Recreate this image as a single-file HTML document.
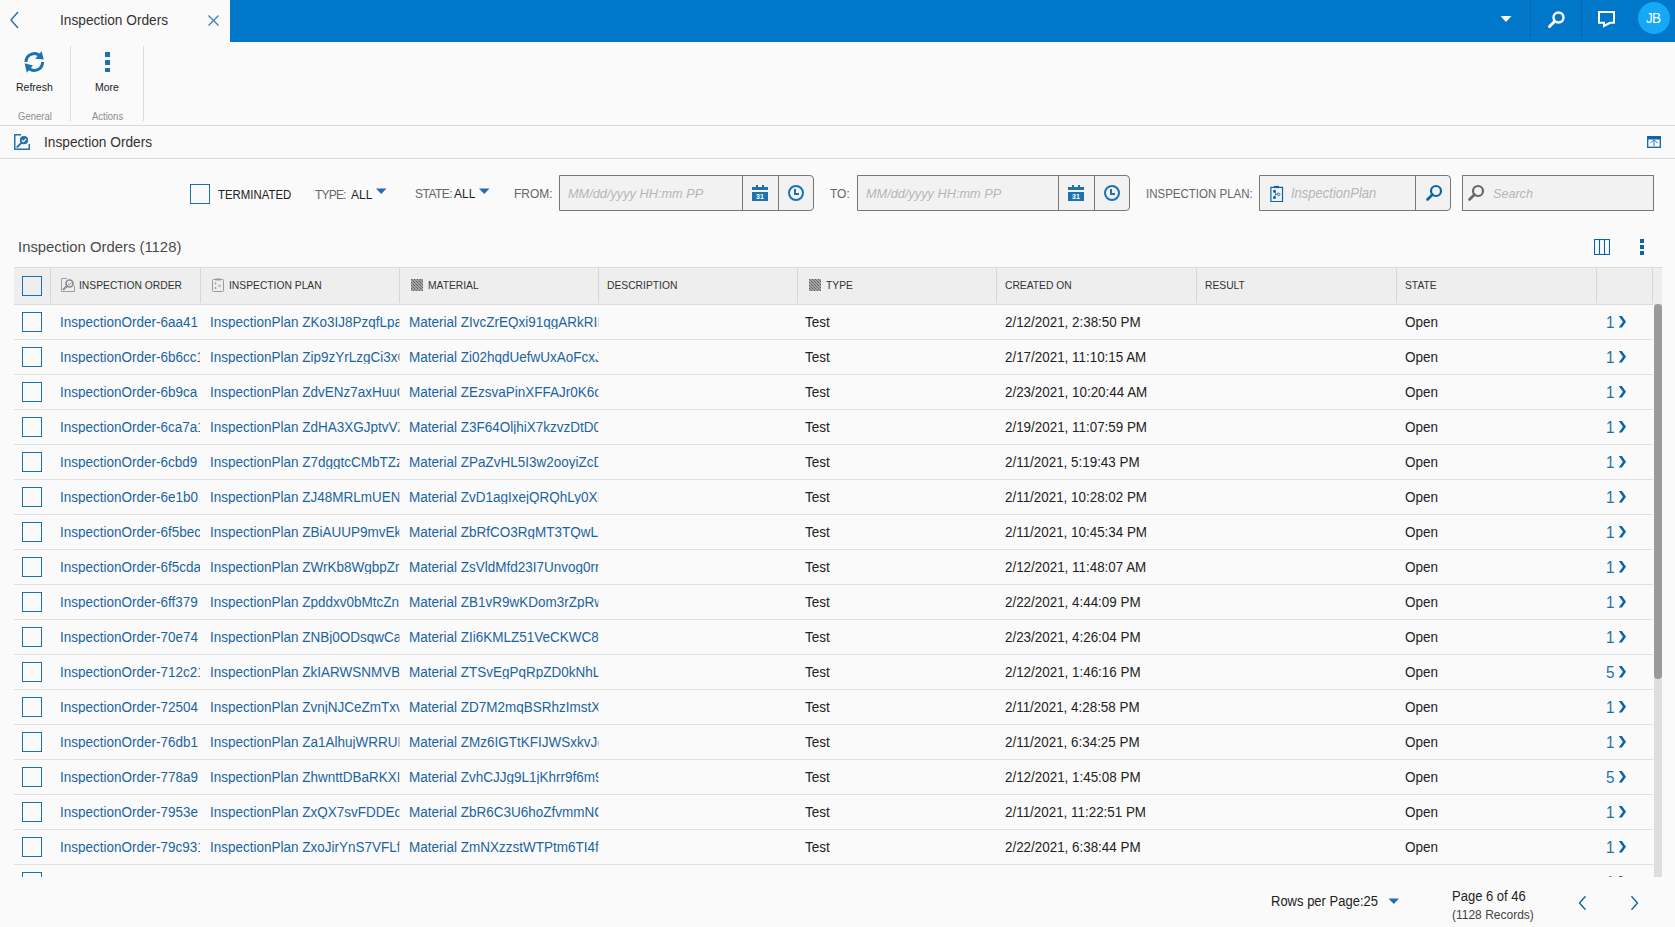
<!DOCTYPE html><html><head><meta charset="utf-8"><style>
*{margin:0;padding:0;box-sizing:border-box}
html,body{width:1675px;height:927px;overflow:hidden;background:#fafafa;font-family:"Liberation Sans",sans-serif;color:#333}
.a{position:absolute}
.t{position:absolute;white-space:nowrap;line-height:1;transform:scaleX(0.933);transform-origin:0 0}
</style></head><body>
<div class="a" style="left:230px;top:0;width:1445px;height:42px;background:#0077c8"></div>
<svg class="a" style="left:8px;top:10px" width="14" height="20" viewBox="0 0 14 20"><path d="M10 2 L3 10 L10 18" fill="none" stroke="#1f6fb2" stroke-width="1.4"/></svg>
<div class="t" style="left:60px;top:13px;font-size:14.69px;color:#333">Inspection Orders</div>
<svg class="a" style="left:207px;top:14px" width="13" height="13" viewBox="0 0 13 13"><path d="M1.5 1.5 L11.5 11.5 M11.5 1.5 L1.5 11.5" stroke="#3d7fb8" stroke-width="1.3"/></svg>
<svg class="a" style="left:1500px;top:15px" width="12" height="8" viewBox="0 0 12 8"><path d="M0.5 1 L11.5 1 L6 7 Z" fill="#fff"/></svg>
<div class="a" style="left:1530px;top:0;width:1px;height:42px;background:#0867b0"></div>
<div class="a" style="left:1581px;top:0;width:1px;height:42px;background:#0867b0"></div>
<svg class="a" style="left:1546px;top:10px" width="22" height="20" viewBox="0 0 22 20"><circle cx="12.5" cy="7.5" r="5" fill="none" stroke="#fff" stroke-width="2.4"/><path d="M8.8 11.2 L3.5 16.5" stroke="#fff" stroke-width="3" stroke-linecap="round"/></svg>
<svg class="a" style="left:1596px;top:10px" width="20" height="19" viewBox="0 0 20 19"><path d="M3 2 H18 V12.8 H14 L8 16 V12.8 H3 Z" fill="none" stroke="#fff" stroke-width="2" stroke-linejoin="miter"/></svg>
<div class="a" style="left:1638px;top:2px;width:32px;height:32px;border-radius:50%;background:#14a8f7"></div>
<div class="t" style="left:1646px;top:11px;font-size:14.47px;letter-spacing:-0.8px;color:#fff">JB</div>
<svg class="a" style="left:24px;top:50px" width="21" height="24" viewBox="0 0 21 24"><path d="M2 12 A8.3 8.3 0 0 1 16.66 6.66" fill="none" stroke="#1f72b0" stroke-width="3"/><path d="M17.6 1.2 L19.8 9.6 L11.2 8.8 Z" fill="#1f72b0"/><path d="M18.6 12 A8.3 8.3 0 0 1 3.94 17.33" fill="none" stroke="#1f72b0" stroke-width="3"/><path d="M0.6 13.2 L9 15.4 L2.8 22.8 Z" fill="#1f72b0"/></svg>
<div class="t" style="left:16px;top:82px;font-size:11.26px;color:#222">Refresh</div>
<div class="a" style="left:105px;top:52px;width:4.5px;height:4.5px;background:#1f72b0"></div>
<div class="a" style="left:105px;top:60px;width:4.5px;height:4.5px;background:#1f72b0"></div>
<div class="a" style="left:105px;top:67.5px;width:4.5px;height:4.5px;background:#1f72b0"></div>
<div class="t" style="left:95px;top:82px;font-size:11.26px;color:#222">More</div>
<div class="t" style="left:18px;top:112px;font-size:10.18px;color:#8c8c8c">General</div>
<div class="t" style="left:92px;top:112px;font-size:10.18px;color:#8c8c8c">Actions</div>
<div class="a" style="left:70px;top:46px;width:1px;height:75px;background:#dcdcdc"></div>
<div class="a" style="left:143px;top:46px;width:1px;height:75px;background:#dcdcdc"></div>
<div class="a" style="left:0;top:125px;width:1675px;height:1px;background:#d9d9d9"></div>
<svg class="a" style="left:14px;top:134px" width="16" height="16" viewBox="0 0 16 16"><path d="M7 0.75 H0.75 V15.25 H15.25 V10" fill="none" stroke="#1f72b0" stroke-width="1.5"/><circle cx="10" cy="6.2" r="4.1" fill="#1f72b0"/><path d="M7.9 6.2 L9.5 7.7 L12.1 4.8" fill="none" stroke="#fff" stroke-width="1.2"/><path d="M7.4 8.9 L3.3 12.9" stroke="#1f72b0" stroke-width="2" stroke-linecap="round"/></svg>
<div class="t" style="left:44px;top:134.5px;font-size:14.69px;color:#333">Inspection Orders</div>
<svg class="a" style="left:1647px;top:136px" width="14" height="12" viewBox="0 0 14 12"><rect x="0.7" y="0.7" width="12.6" height="10.6" fill="none" stroke="#0b64a6" stroke-width="1.3"/><rect x="0.5" y="0.5" width="13" height="3" fill="#0b64a6"/><path d="M7 10 V4 M3.5 7 L7 3.8 L10.5 7" fill="none" stroke="#2a78b8" stroke-width="1"/></svg>
<div class="a" style="left:0;top:158px;width:1675px;height:1px;background:#d9d9d9"></div>
<div class="a" style="left:190px;top:184px;width:20px;height:20px;border:1.5px solid #1f6fa8;background:#fff0"></div>
<div class="t" style="left:218px;top:189px;font-size:12.22px;color:#222">TERMINATED</div>
<div class="t" style="left:315px;top:189px;font-size:12.86px;letter-spacing:-0.8px;color:#666">TYPE:</div>
<div class="t" style="left:351px;top:189px;font-size:12.86px;color:#222">ALL</div>
<svg class="a" style="left:376px;top:188px" width="11" height="7" viewBox="0 0 11 7"><path d="M0 0.5 H10.5 L5.25 6 Z" fill="#1f6fb2"/></svg>
<div class="t" style="left:415px;top:188px;font-size:12.86px;letter-spacing:-0.55px;color:#666">STATE:</div>
<div class="t" style="left:454px;top:188px;font-size:12.86px;color:#222">ALL</div>
<svg class="a" style="left:479px;top:188px" width="11" height="7" viewBox="0 0 11 7"><path d="M0 0.5 H10.5 L5.25 6 Z" fill="#1f6fb2"/></svg>
<div class="t" style="left:514px;top:188px;font-size:12.86px;color:#666">FROM:</div>
<div class="a" style="left:559px;top:175px;width:255px;height:36px;border:1px solid #777;border-radius:0 4px 4px 0;background:#f2f2f2"></div>
<div class="a" style="left:742px;top:175px;width:1px;height:36px;background:#777"></div>
<div class="a" style="left:778px;top:175px;width:1px;height:36px;background:#777"></div>
<div class="t" style="left:568px;top:187px;font-size:13.66px;color:#b6b6b6;font-style:italic">MM/dd/yyyy HH:mm PP</div>
<svg class="a" style="left:752px;top:185px" width="16" height="16" viewBox="0 0 16 16"><rect x="4" y="0" width="2" height="3" fill="#1f72b0"/><rect x="10" y="0" width="2" height="3" fill="#1f72b0"/><rect x="0" y="2" width="16" height="3" fill="#1f72b0"/><rect x="0" y="7" width="16" height="9" fill="#1f72b0"/><text x="8" y="14.3" font-size="7" font-family="Liberation Sans" font-weight="bold" fill="#fff" text-anchor="middle">31</text></svg>
<svg class="a" style="left:788px;top:185px" width="16" height="16" viewBox="0 0 16 16"><circle cx="8" cy="8" r="7" fill="none" stroke="#1f72b0" stroke-width="2"/><path d="M7 4 V9 H11" fill="none" stroke="#1f72b0" stroke-width="2"/></svg>
<div class="t" style="left:830px;top:188px;font-size:12.86px;color:#666">TO:</div>
<div class="a" style="left:857px;top:175px;width:273px;height:36px;border:1px solid #777;border-radius:0 4px 4px 0;background:#f2f2f2"></div>
<div class="a" style="left:1058px;top:175px;width:1px;height:36px;background:#777"></div>
<div class="a" style="left:1094px;top:175px;width:1px;height:36px;background:#777"></div>
<div class="t" style="left:866px;top:187px;font-size:13.66px;color:#b6b6b6;font-style:italic">MM/dd/yyyy HH:mm PP</div>
<svg class="a" style="left:1068px;top:185px" width="16" height="16" viewBox="0 0 16 16"><rect x="4" y="0" width="2" height="3" fill="#1f72b0"/><rect x="10" y="0" width="2" height="3" fill="#1f72b0"/><rect x="0" y="2" width="16" height="3" fill="#1f72b0"/><rect x="0" y="7" width="16" height="9" fill="#1f72b0"/><text x="8" y="14.3" font-size="7" font-family="Liberation Sans" font-weight="bold" fill="#fff" text-anchor="middle">31</text></svg>
<svg class="a" style="left:1104px;top:185px" width="16" height="16" viewBox="0 0 16 16"><circle cx="8" cy="8" r="7" fill="none" stroke="#1f72b0" stroke-width="2"/><path d="M7 4 V9 H11" fill="none" stroke="#1f72b0" stroke-width="2"/></svg>
<div class="t" style="left:1146px;top:188px;font-size:12.33px;color:#666">INSPECTION PLAN:</div>
<div class="a" style="left:1259px;top:175px;width:192px;height:36px;border:1px solid #777;border-radius:0 4px 4px 0;background:#f2f2f2"></div>
<div class="a" style="left:1415px;top:175px;width:1px;height:36px;background:#777"></div>
<svg class="a" style="left:1270px;top:185px" width="14" height="17" viewBox="0 0 14 17"><rect x="0.9" y="2.4" width="11.6" height="14.2" fill="none" stroke="#0b64a6" stroke-width="1.2"/><rect x="3.9" y="0.9" width="5.1" height="2.2" fill="#0b64a6"/><circle cx="4.5" cy="6.2" r="1.5" fill="#0b64a6"/><circle cx="4.5" cy="12.4" r="1.5" fill="#0b64a6"/><circle cx="8.6" cy="9.3" r="1.3" fill="none" stroke="#0b64a6" stroke-width="0.9"/><path d="M4.5 6.2 L5.6 9.3 L4.5 12.4 M5.6 9.3 H7.3" fill="none" stroke="#0b64a6" stroke-width="0.8"/></svg>
<div class="t" style="left:1291px;top:187px;font-size:13.94px;color:#b6b6b6;font-style:italic">InspectionPlan</div>
<svg class="a" style="left:1425px;top:184px" width="19" height="18" viewBox="0 0 19 18"><circle cx="11" cy="7" r="5" fill="none" stroke="#0b64a6" stroke-width="2.2"/><path d="M7.5 10.5 L2.5 15.5" stroke="#0b64a6" stroke-width="2.6" stroke-linecap="round"/></svg>
<div class="a" style="left:1462px;top:175px;width:192px;height:36px;border:1px solid #777;background:#f2f2f2"></div>
<svg class="a" style="left:1467px;top:184px" width="19" height="18" viewBox="0 0 19 18"><circle cx="11" cy="7" r="5" fill="none" stroke="#666" stroke-width="2.2"/><path d="M7.5 10.5 L2.5 15.5" stroke="#666" stroke-width="2.6" stroke-linecap="round"/></svg>
<div class="t" style="left:1493px;top:187px;font-size:13.5px;color:#b6b6b6;font-style:italic">Search</div>
<div class="t" style="left:18px;top:239px;font-size:15.3px;transform:scaleX(0.972);color:#4a4a4a">Inspection Orders (1128)</div>
<svg class="a" style="left:1594px;top:239px" width="16" height="16" viewBox="0 0 16 16"><rect x="0.5" y="0.5" width="15" height="15" fill="none" stroke="#0b64a6" stroke-width="1.1"/><path d="M5.5 0.5 V15.5 M10.5 0.5 V15.5" stroke="#0b64a6" stroke-width="1.1"/></svg>
<div class="a" style="left:1640px;top:239px;width:4px;height:4px;background:#0b64a6"></div>
<div class="a" style="left:1640px;top:245px;width:4px;height:4px;background:#0b64a6"></div>
<div class="a" style="left:1640px;top:251px;width:4px;height:4px;background:#0b64a6"></div>
<div class="a" style="left:14px;top:267px;width:1648px;height:37px;background:#eeeeee;border-top:1px solid #dadada"></div>
<div class="a" style="left:14px;top:304px;width:1639px;height:1px;background:#dadada"></div>
<div class="a" style="left:50px;top:268px;width:1px;height:35px;background:#d6d6d6"></div>
<div class="a" style="left:200px;top:268px;width:1px;height:35px;background:#d6d6d6"></div>
<div class="a" style="left:399px;top:268px;width:1px;height:35px;background:#d6d6d6"></div>
<div class="a" style="left:598px;top:268px;width:1px;height:35px;background:#d6d6d6"></div>
<div class="a" style="left:797px;top:268px;width:1px;height:35px;background:#d6d6d6"></div>
<div class="a" style="left:996px;top:268px;width:1px;height:35px;background:#d6d6d6"></div>
<div class="a" style="left:1196px;top:268px;width:1px;height:35px;background:#d6d6d6"></div>
<div class="a" style="left:1396px;top:268px;width:1px;height:35px;background:#d6d6d6"></div>
<div class="a" style="left:1596px;top:268px;width:1px;height:35px;background:#d6d6d6"></div>
<div class="a" style="left:1652px;top:268px;width:1px;height:35px;background:#d6d6d6"></div>
<div class="a" style="left:22px;top:276px;width:20px;height:20px;border:1.5px solid #1f6fa8"></div>
<svg class="a" style="left:61px;top:278px" width="14" height="14" viewBox="0 0 14 14"><path d="M6 0.5 H0.5 V13.5 H13.5 V7.5" fill="none" stroke="#a0a0a0" stroke-width="1"/><circle cx="8.5" cy="5.5" r="3.5" fill="none" stroke="#8a8a8a" stroke-width="1.7"/><path d="M6.9 5.6 L8.2 6.8 L10.3 4.5" fill="none" stroke="#8a8a8a" stroke-width="1"/><path d="M6 8 L2.6 11.3" stroke="#8a8a8a" stroke-width="1.9" stroke-linecap="round"/></svg>
<svg class="a" style="left:212px;top:278px" width="12" height="14" viewBox="0 0 12 14"><rect x="0.5" y="1.5" width="11" height="12" rx="1" fill="none" stroke="#999" stroke-width="1"/><rect x="3.5" y="0.5" width="5" height="2" fill="#999"/><circle cx="3.5" cy="5.5" r="0.9" fill="#999"/><circle cx="3.5" cy="10" r="0.9" fill="#999"/><circle cx="7.5" cy="7.8" r="1" fill="none" stroke="#999" stroke-width="0.7"/></svg>
<svg class="a" style="left:411px;top:279px" width="12" height="12" viewBox="0 0 12 12"><defs><pattern id="h1" width="3" height="3" patternUnits="userSpaceOnUse"><rect width="3" height="3" fill="#a4a4a4"/><rect x="0" y="0" width="1" height="1" fill="#5e5e5e"/><rect x="1" y="1" width="1" height="1" fill="#7a7a7a"/><rect x="2" y="2" width="1" height="1" fill="#5e5e5e"/></pattern></defs><rect width="12" height="12" fill="url(#h1)"/></svg>
<svg class="a" style="left:809px;top:279px" width="12" height="12" viewBox="0 0 12 12"><defs><pattern id="h2" width="3" height="3" patternUnits="userSpaceOnUse"><rect width="3" height="3" fill="#a4a4a4"/><rect x="0" y="0" width="1" height="1" fill="#5e5e5e"/><rect x="1" y="1" width="1" height="1" fill="#7a7a7a"/><rect x="2" y="2" width="1" height="1" fill="#5e5e5e"/></pattern></defs><rect width="12" height="12" fill="url(#h2)"/></svg>
<div class="t" style="left:79px;top:280px;font-size:11.04px;color:#333">INSPECTION ORDER</div>
<div class="t" style="left:229px;top:280px;font-size:11.04px;color:#333">INSPECTION PLAN</div>
<div class="t" style="left:428px;top:280px;font-size:11.04px;color:#333">MATERIAL</div>
<div class="t" style="left:607px;top:280px;font-size:11.04px;color:#333">DESCRIPTION</div>
<div class="t" style="left:826px;top:280px;font-size:11.04px;color:#333">TYPE</div>
<div class="t" style="left:1005px;top:280px;font-size:11.04px;color:#333">CREATED ON</div>
<div class="t" style="left:1205px;top:280px;font-size:11.04px;color:#333">RESULT</div>
<div class="t" style="left:1405px;top:280px;font-size:11.04px;color:#333">STATE</div>
<div class="a" style="left:14px;top:305px;width:1639px;height:572px;overflow:hidden">
<div class="a" style="left:0;top:0px;width:1639px;height:35px;border-bottom:1px solid #e0e0e0">
<div class="a" style="left:8px;top:7px;width:20px;height:20px;border:1.5px solid #1f6fa8"></div>
<div class="t" style="left:46px;top:10px;width:150px;overflow:hidden;font-size:14.47px;color:#1a64a0">InspectionOrder-6aa41</div>
<div class="t" style="left:196px;top:10px;width:203px;overflow:hidden;font-size:14.47px;color:#1a64a0">InspectionPlan ZKo3IJ8PzqfLpaX</div>
<div class="t" style="left:395px;top:10px;width:203px;overflow:hidden;font-size:14.47px;color:#1a64a0">Material ZIvcZrEQxi91qgARkRIN</div>
<div class="t" style="left:791px;top:10px;font-size:14.47px;color:#222">Test</div>
<div class="t" style="left:991px;top:10px;font-size:14.36px;color:#222">2/12/2021, 2:38:50 PM</div>
<div class="t" style="left:1391px;top:10px;font-size:14.47px;color:#222">Open</div>
<div class="t" style="left:1592px;top:9px;font-size:16.3px;color:#1f6fa8">1</div>
<svg class="a" style="left:1604px;top:11px" width="10" height="12" viewBox="0 0 10 12"><path d="M0.8 0 H3.9 L8 5.75 L3.9 11.5 H0.8 L4.9 5.75 Z" fill="#0b64a6"/></svg>
</div>
<div class="a" style="left:0;top:35px;width:1639px;height:35px;border-bottom:1px solid #e0e0e0">
<div class="a" style="left:8px;top:7px;width:20px;height:20px;border:1.5px solid #1f6fa8"></div>
<div class="t" style="left:46px;top:10px;width:150px;overflow:hidden;font-size:14.47px;color:#1a64a0">InspectionOrder-6b6cc1</div>
<div class="t" style="left:196px;top:10px;width:203px;overflow:hidden;font-size:14.47px;color:#1a64a0">InspectionPlan Zip9zYrLzgCi3xC</div>
<div class="t" style="left:395px;top:10px;width:203px;overflow:hidden;font-size:14.47px;color:#1a64a0">Material Zi02hqdUefwUxAoFcxJ</div>
<div class="t" style="left:791px;top:10px;font-size:14.47px;color:#222">Test</div>
<div class="t" style="left:991px;top:10px;font-size:14.36px;color:#222">2/17/2021, 11:10:15 AM</div>
<div class="t" style="left:1391px;top:10px;font-size:14.47px;color:#222">Open</div>
<div class="t" style="left:1592px;top:9px;font-size:16.3px;color:#1f6fa8">1</div>
<svg class="a" style="left:1604px;top:11px" width="10" height="12" viewBox="0 0 10 12"><path d="M0.8 0 H3.9 L8 5.75 L3.9 11.5 H0.8 L4.9 5.75 Z" fill="#0b64a6"/></svg>
</div>
<div class="a" style="left:0;top:70px;width:1639px;height:35px;border-bottom:1px solid #e0e0e0">
<div class="a" style="left:8px;top:7px;width:20px;height:20px;border:1.5px solid #1f6fa8"></div>
<div class="t" style="left:46px;top:10px;width:150px;overflow:hidden;font-size:14.47px;color:#1a64a0">InspectionOrder-6b9ca</div>
<div class="t" style="left:196px;top:10px;width:203px;overflow:hidden;font-size:14.47px;color:#1a64a0">InspectionPlan ZdvENz7axHuuC</div>
<div class="t" style="left:395px;top:10px;width:203px;overflow:hidden;font-size:14.47px;color:#1a64a0">Material ZEzsvaPinXFFAJr0K6o6</div>
<div class="t" style="left:791px;top:10px;font-size:14.47px;color:#222">Test</div>
<div class="t" style="left:991px;top:10px;font-size:14.36px;color:#222">2/23/2021, 10:20:44 AM</div>
<div class="t" style="left:1391px;top:10px;font-size:14.47px;color:#222">Open</div>
<div class="t" style="left:1592px;top:9px;font-size:16.3px;color:#1f6fa8">1</div>
<svg class="a" style="left:1604px;top:11px" width="10" height="12" viewBox="0 0 10 12"><path d="M0.8 0 H3.9 L8 5.75 L3.9 11.5 H0.8 L4.9 5.75 Z" fill="#0b64a6"/></svg>
</div>
<div class="a" style="left:0;top:105px;width:1639px;height:35px;border-bottom:1px solid #e0e0e0">
<div class="a" style="left:8px;top:7px;width:20px;height:20px;border:1.5px solid #1f6fa8"></div>
<div class="t" style="left:46px;top:10px;width:150px;overflow:hidden;font-size:14.47px;color:#1a64a0">InspectionOrder-6ca7a1</div>
<div class="t" style="left:196px;top:10px;width:203px;overflow:hidden;font-size:14.47px;color:#1a64a0">InspectionPlan ZdHA3XGJptvVZY</div>
<div class="t" style="left:395px;top:10px;width:203px;overflow:hidden;font-size:14.47px;color:#1a64a0">Material Z3F64OljhiX7kzvzDtD0</div>
<div class="t" style="left:791px;top:10px;font-size:14.47px;color:#222">Test</div>
<div class="t" style="left:991px;top:10px;font-size:14.36px;color:#222">2/19/2021, 11:07:59 PM</div>
<div class="t" style="left:1391px;top:10px;font-size:14.47px;color:#222">Open</div>
<div class="t" style="left:1592px;top:9px;font-size:16.3px;color:#1f6fa8">1</div>
<svg class="a" style="left:1604px;top:11px" width="10" height="12" viewBox="0 0 10 12"><path d="M0.8 0 H3.9 L8 5.75 L3.9 11.5 H0.8 L4.9 5.75 Z" fill="#0b64a6"/></svg>
</div>
<div class="a" style="left:0;top:140px;width:1639px;height:35px;border-bottom:1px solid #e0e0e0">
<div class="a" style="left:8px;top:7px;width:20px;height:20px;border:1.5px solid #1f6fa8"></div>
<div class="t" style="left:46px;top:10px;width:150px;overflow:hidden;font-size:14.47px;color:#1a64a0">InspectionOrder-6cbd9</div>
<div class="t" style="left:196px;top:10px;width:203px;overflow:hidden;font-size:14.47px;color:#1a64a0">InspectionPlan Z7dggtcCMbTZz</div>
<div class="t" style="left:395px;top:10px;width:203px;overflow:hidden;font-size:14.47px;color:#1a64a0">Material ZPaZvHL5I3w2ooyiZcD</div>
<div class="t" style="left:791px;top:10px;font-size:14.47px;color:#222">Test</div>
<div class="t" style="left:991px;top:10px;font-size:14.36px;color:#222">2/11/2021, 5:19:43 PM</div>
<div class="t" style="left:1391px;top:10px;font-size:14.47px;color:#222">Open</div>
<div class="t" style="left:1592px;top:9px;font-size:16.3px;color:#1f6fa8">1</div>
<svg class="a" style="left:1604px;top:11px" width="10" height="12" viewBox="0 0 10 12"><path d="M0.8 0 H3.9 L8 5.75 L3.9 11.5 H0.8 L4.9 5.75 Z" fill="#0b64a6"/></svg>
</div>
<div class="a" style="left:0;top:175px;width:1639px;height:35px;border-bottom:1px solid #e0e0e0">
<div class="a" style="left:8px;top:7px;width:20px;height:20px;border:1.5px solid #1f6fa8"></div>
<div class="t" style="left:46px;top:10px;width:150px;overflow:hidden;font-size:14.47px;color:#1a64a0">InspectionOrder-6e1b0</div>
<div class="t" style="left:196px;top:10px;width:203px;overflow:hidden;font-size:14.47px;color:#1a64a0">InspectionPlan ZJ48MRLmUENv</div>
<div class="t" style="left:395px;top:10px;width:203px;overflow:hidden;font-size:14.47px;color:#1a64a0">Material ZvD1agIxejQRQhLy0XH</div>
<div class="t" style="left:791px;top:10px;font-size:14.47px;color:#222">Test</div>
<div class="t" style="left:991px;top:10px;font-size:14.36px;color:#222">2/11/2021, 10:28:02 PM</div>
<div class="t" style="left:1391px;top:10px;font-size:14.47px;color:#222">Open</div>
<div class="t" style="left:1592px;top:9px;font-size:16.3px;color:#1f6fa8">1</div>
<svg class="a" style="left:1604px;top:11px" width="10" height="12" viewBox="0 0 10 12"><path d="M0.8 0 H3.9 L8 5.75 L3.9 11.5 H0.8 L4.9 5.75 Z" fill="#0b64a6"/></svg>
</div>
<div class="a" style="left:0;top:210px;width:1639px;height:35px;border-bottom:1px solid #e0e0e0">
<div class="a" style="left:8px;top:7px;width:20px;height:20px;border:1.5px solid #1f6fa8"></div>
<div class="t" style="left:46px;top:10px;width:150px;overflow:hidden;font-size:14.47px;color:#1a64a0">InspectionOrder-6f5bec</div>
<div class="t" style="left:196px;top:10px;width:203px;overflow:hidden;font-size:14.47px;color:#1a64a0">InspectionPlan ZBiAUUP9mvEkc</div>
<div class="t" style="left:395px;top:10px;width:203px;overflow:hidden;font-size:14.47px;color:#1a64a0">Material ZbRfCO3RgMT3TQwLb</div>
<div class="t" style="left:791px;top:10px;font-size:14.47px;color:#222">Test</div>
<div class="t" style="left:991px;top:10px;font-size:14.36px;color:#222">2/11/2021, 10:45:34 PM</div>
<div class="t" style="left:1391px;top:10px;font-size:14.47px;color:#222">Open</div>
<div class="t" style="left:1592px;top:9px;font-size:16.3px;color:#1f6fa8">1</div>
<svg class="a" style="left:1604px;top:11px" width="10" height="12" viewBox="0 0 10 12"><path d="M0.8 0 H3.9 L8 5.75 L3.9 11.5 H0.8 L4.9 5.75 Z" fill="#0b64a6"/></svg>
</div>
<div class="a" style="left:0;top:245px;width:1639px;height:35px;border-bottom:1px solid #e0e0e0">
<div class="a" style="left:8px;top:7px;width:20px;height:20px;border:1.5px solid #1f6fa8"></div>
<div class="t" style="left:46px;top:10px;width:150px;overflow:hidden;font-size:14.47px;color:#1a64a0">InspectionOrder-6f5cda</div>
<div class="t" style="left:196px;top:10px;width:203px;overflow:hidden;font-size:14.47px;color:#1a64a0">InspectionPlan ZWrKb8WgbpZn</div>
<div class="t" style="left:395px;top:10px;width:203px;overflow:hidden;font-size:14.47px;color:#1a64a0">Material ZsVldMfd23I7Unvog0rr</div>
<div class="t" style="left:791px;top:10px;font-size:14.47px;color:#222">Test</div>
<div class="t" style="left:991px;top:10px;font-size:14.36px;color:#222">2/12/2021, 11:48:07 AM</div>
<div class="t" style="left:1391px;top:10px;font-size:14.47px;color:#222">Open</div>
<div class="t" style="left:1592px;top:9px;font-size:16.3px;color:#1f6fa8">1</div>
<svg class="a" style="left:1604px;top:11px" width="10" height="12" viewBox="0 0 10 12"><path d="M0.8 0 H3.9 L8 5.75 L3.9 11.5 H0.8 L4.9 5.75 Z" fill="#0b64a6"/></svg>
</div>
<div class="a" style="left:0;top:280px;width:1639px;height:35px;border-bottom:1px solid #e0e0e0">
<div class="a" style="left:8px;top:7px;width:20px;height:20px;border:1.5px solid #1f6fa8"></div>
<div class="t" style="left:46px;top:10px;width:150px;overflow:hidden;font-size:14.47px;color:#1a64a0">InspectionOrder-6ff379</div>
<div class="t" style="left:196px;top:10px;width:203px;overflow:hidden;font-size:14.47px;color:#1a64a0">InspectionPlan Zpddxv0bMtcZn</div>
<div class="t" style="left:395px;top:10px;width:203px;overflow:hidden;font-size:14.47px;color:#1a64a0">Material ZB1vR9wKDom3rZpRw</div>
<div class="t" style="left:791px;top:10px;font-size:14.47px;color:#222">Test</div>
<div class="t" style="left:991px;top:10px;font-size:14.36px;color:#222">2/22/2021, 4:44:09 PM</div>
<div class="t" style="left:1391px;top:10px;font-size:14.47px;color:#222">Open</div>
<div class="t" style="left:1592px;top:9px;font-size:16.3px;color:#1f6fa8">1</div>
<svg class="a" style="left:1604px;top:11px" width="10" height="12" viewBox="0 0 10 12"><path d="M0.8 0 H3.9 L8 5.75 L3.9 11.5 H0.8 L4.9 5.75 Z" fill="#0b64a6"/></svg>
</div>
<div class="a" style="left:0;top:315px;width:1639px;height:35px;border-bottom:1px solid #e0e0e0">
<div class="a" style="left:8px;top:7px;width:20px;height:20px;border:1.5px solid #1f6fa8"></div>
<div class="t" style="left:46px;top:10px;width:150px;overflow:hidden;font-size:14.47px;color:#1a64a0">InspectionOrder-70e74</div>
<div class="t" style="left:196px;top:10px;width:203px;overflow:hidden;font-size:14.47px;color:#1a64a0">InspectionPlan ZNBj0ODsqwCa</div>
<div class="t" style="left:395px;top:10px;width:203px;overflow:hidden;font-size:14.47px;color:#1a64a0">Material ZIi6KMLZ51VeCKWC8w</div>
<div class="t" style="left:791px;top:10px;font-size:14.47px;color:#222">Test</div>
<div class="t" style="left:991px;top:10px;font-size:14.36px;color:#222">2/23/2021, 4:26:04 PM</div>
<div class="t" style="left:1391px;top:10px;font-size:14.47px;color:#222">Open</div>
<div class="t" style="left:1592px;top:9px;font-size:16.3px;color:#1f6fa8">1</div>
<svg class="a" style="left:1604px;top:11px" width="10" height="12" viewBox="0 0 10 12"><path d="M0.8 0 H3.9 L8 5.75 L3.9 11.5 H0.8 L4.9 5.75 Z" fill="#0b64a6"/></svg>
</div>
<div class="a" style="left:0;top:350px;width:1639px;height:35px;border-bottom:1px solid #e0e0e0">
<div class="a" style="left:8px;top:7px;width:20px;height:20px;border:1.5px solid #1f6fa8"></div>
<div class="t" style="left:46px;top:10px;width:150px;overflow:hidden;font-size:14.47px;color:#1a64a0">InspectionOrder-712c21</div>
<div class="t" style="left:196px;top:10px;width:203px;overflow:hidden;font-size:14.47px;color:#1a64a0">InspectionPlan ZkIARWSNMVBIs</div>
<div class="t" style="left:395px;top:10px;width:203px;overflow:hidden;font-size:14.47px;color:#1a64a0">Material ZTSvEgPqRpZD0kNhL1</div>
<div class="t" style="left:791px;top:10px;font-size:14.47px;color:#222">Test</div>
<div class="t" style="left:991px;top:10px;font-size:14.36px;color:#222">2/12/2021, 1:46:16 PM</div>
<div class="t" style="left:1391px;top:10px;font-size:14.47px;color:#222">Open</div>
<div class="t" style="left:1592px;top:9px;font-size:16.3px;color:#1f6fa8">5</div>
<svg class="a" style="left:1604px;top:11px" width="10" height="12" viewBox="0 0 10 12"><path d="M0.8 0 H3.9 L8 5.75 L3.9 11.5 H0.8 L4.9 5.75 Z" fill="#0b64a6"/></svg>
</div>
<div class="a" style="left:0;top:385px;width:1639px;height:35px;border-bottom:1px solid #e0e0e0">
<div class="a" style="left:8px;top:7px;width:20px;height:20px;border:1.5px solid #1f6fa8"></div>
<div class="t" style="left:46px;top:10px;width:150px;overflow:hidden;font-size:14.47px;color:#1a64a0">InspectionOrder-72504</div>
<div class="t" style="left:196px;top:10px;width:203px;overflow:hidden;font-size:14.47px;color:#1a64a0">InspectionPlan ZvnjNJCeZmTxvl</div>
<div class="t" style="left:395px;top:10px;width:203px;overflow:hidden;font-size:14.47px;color:#1a64a0">Material ZD7M2mqBSRhzImstX</div>
<div class="t" style="left:791px;top:10px;font-size:14.47px;color:#222">Test</div>
<div class="t" style="left:991px;top:10px;font-size:14.36px;color:#222">2/11/2021, 4:28:58 PM</div>
<div class="t" style="left:1391px;top:10px;font-size:14.47px;color:#222">Open</div>
<div class="t" style="left:1592px;top:9px;font-size:16.3px;color:#1f6fa8">1</div>
<svg class="a" style="left:1604px;top:11px" width="10" height="12" viewBox="0 0 10 12"><path d="M0.8 0 H3.9 L8 5.75 L3.9 11.5 H0.8 L4.9 5.75 Z" fill="#0b64a6"/></svg>
</div>
<div class="a" style="left:0;top:420px;width:1639px;height:35px;border-bottom:1px solid #e0e0e0">
<div class="a" style="left:8px;top:7px;width:20px;height:20px;border:1.5px solid #1f6fa8"></div>
<div class="t" style="left:46px;top:10px;width:150px;overflow:hidden;font-size:14.47px;color:#1a64a0">InspectionOrder-76db1</div>
<div class="t" style="left:196px;top:10px;width:203px;overflow:hidden;font-size:14.47px;color:#1a64a0">InspectionPlan Za1AlhujWRRUK</div>
<div class="t" style="left:395px;top:10px;width:203px;overflow:hidden;font-size:14.47px;color:#1a64a0">Material ZMz6IGTtKFIJWSxkvJgJc</div>
<div class="t" style="left:791px;top:10px;font-size:14.47px;color:#222">Test</div>
<div class="t" style="left:991px;top:10px;font-size:14.36px;color:#222">2/11/2021, 6:34:25 PM</div>
<div class="t" style="left:1391px;top:10px;font-size:14.47px;color:#222">Open</div>
<div class="t" style="left:1592px;top:9px;font-size:16.3px;color:#1f6fa8">1</div>
<svg class="a" style="left:1604px;top:11px" width="10" height="12" viewBox="0 0 10 12"><path d="M0.8 0 H3.9 L8 5.75 L3.9 11.5 H0.8 L4.9 5.75 Z" fill="#0b64a6"/></svg>
</div>
<div class="a" style="left:0;top:455px;width:1639px;height:35px;border-bottom:1px solid #e0e0e0">
<div class="a" style="left:8px;top:7px;width:20px;height:20px;border:1.5px solid #1f6fa8"></div>
<div class="t" style="left:46px;top:10px;width:150px;overflow:hidden;font-size:14.47px;color:#1a64a0">InspectionOrder-778a9</div>
<div class="t" style="left:196px;top:10px;width:203px;overflow:hidden;font-size:14.47px;color:#1a64a0">InspectionPlan ZhwnttDBaRKXIj</div>
<div class="t" style="left:395px;top:10px;width:203px;overflow:hidden;font-size:14.47px;color:#1a64a0">Material ZvhCJJg9L1jKhrr9f6m9Y</div>
<div class="t" style="left:791px;top:10px;font-size:14.47px;color:#222">Test</div>
<div class="t" style="left:991px;top:10px;font-size:14.36px;color:#222">2/12/2021, 1:45:08 PM</div>
<div class="t" style="left:1391px;top:10px;font-size:14.47px;color:#222">Open</div>
<div class="t" style="left:1592px;top:9px;font-size:16.3px;color:#1f6fa8">5</div>
<svg class="a" style="left:1604px;top:11px" width="10" height="12" viewBox="0 0 10 12"><path d="M0.8 0 H3.9 L8 5.75 L3.9 11.5 H0.8 L4.9 5.75 Z" fill="#0b64a6"/></svg>
</div>
<div class="a" style="left:0;top:490px;width:1639px;height:35px;border-bottom:1px solid #e0e0e0">
<div class="a" style="left:8px;top:7px;width:20px;height:20px;border:1.5px solid #1f6fa8"></div>
<div class="t" style="left:46px;top:10px;width:150px;overflow:hidden;font-size:14.47px;color:#1a64a0">InspectionOrder-7953e</div>
<div class="t" style="left:196px;top:10px;width:203px;overflow:hidden;font-size:14.47px;color:#1a64a0">InspectionPlan ZxQX7svFDDEor</div>
<div class="t" style="left:395px;top:10px;width:203px;overflow:hidden;font-size:14.47px;color:#1a64a0">Material ZbR6C3U6hoZfvmmNC</div>
<div class="t" style="left:791px;top:10px;font-size:14.47px;color:#222">Test</div>
<div class="t" style="left:991px;top:10px;font-size:14.36px;color:#222">2/11/2021, 11:22:51 PM</div>
<div class="t" style="left:1391px;top:10px;font-size:14.47px;color:#222">Open</div>
<div class="t" style="left:1592px;top:9px;font-size:16.3px;color:#1f6fa8">1</div>
<svg class="a" style="left:1604px;top:11px" width="10" height="12" viewBox="0 0 10 12"><path d="M0.8 0 H3.9 L8 5.75 L3.9 11.5 H0.8 L4.9 5.75 Z" fill="#0b64a6"/></svg>
</div>
<div class="a" style="left:0;top:525px;width:1639px;height:35px;border-bottom:1px solid #e0e0e0">
<div class="a" style="left:8px;top:7px;width:20px;height:20px;border:1.5px solid #1f6fa8"></div>
<div class="t" style="left:46px;top:10px;width:150px;overflow:hidden;font-size:14.47px;color:#1a64a0">InspectionOrder-79c931</div>
<div class="t" style="left:196px;top:10px;width:203px;overflow:hidden;font-size:14.47px;color:#1a64a0">InspectionPlan ZxoJirYnS7VFLf9</div>
<div class="t" style="left:395px;top:10px;width:203px;overflow:hidden;font-size:14.47px;color:#1a64a0">Material ZmNXzzstWTPtm6TI4fc</div>
<div class="t" style="left:791px;top:10px;font-size:14.47px;color:#222">Test</div>
<div class="t" style="left:991px;top:10px;font-size:14.36px;color:#222">2/22/2021, 6:38:44 PM</div>
<div class="t" style="left:1391px;top:10px;font-size:14.47px;color:#222">Open</div>
<div class="t" style="left:1592px;top:9px;font-size:16.3px;color:#1f6fa8">1</div>
<svg class="a" style="left:1604px;top:11px" width="10" height="12" viewBox="0 0 10 12"><path d="M0.8 0 H3.9 L8 5.75 L3.9 11.5 H0.8 L4.9 5.75 Z" fill="#0b64a6"/></svg>
</div>
<div class="a" style="left:0;top:560px;width:1639px;height:35px;border-bottom:1px solid #e0e0e0">
<div class="a" style="left:8px;top:7px;width:20px;height:20px;border:1.5px solid #1f6fa8"></div>
<div class="t" style="left:1592px;top:9px;font-size:16.3px;color:#1f6fa8">1</div>
<svg class="a" style="left:1604px;top:11px" width="10" height="12" viewBox="0 0 10 12"><path d="M0.8 0 H3.9 L8 5.75 L3.9 11.5 H0.8 L4.9 5.75 Z" fill="#0b64a6"/></svg>
</div>
</div>
<div class="a" style="left:1654px;top:304px;width:8px;height:573px;background:#dedede"></div>
<div class="a" style="left:1654px;top:304px;width:8px;height:375px;background:#9a9a9a;border-radius:4px 4px 4px 4px"></div>
<div class="t" style="left:1271px;top:895px;font-size:13.94px;color:#222">Rows per Page:25</div>
<svg class="a" style="left:1388px;top:898px" width="12" height="7" viewBox="0 0 12 7"><path d="M0.5 0.5 H11 L5.75 6 Z" fill="#1f6fb2"/></svg>
<div class="t" style="left:1452px;top:890px;font-size:13.94px;color:#222">Page 6 of 46</div>
<div class="t" style="left:1452px;top:908.5px;font-size:12.86px;color:#444">(1128 Records)</div>
<svg class="a" style="left:1576px;top:894px" width="12" height="18" viewBox="0 0 12 18"><path d="M9.5 2.3 L3.5 9 L9.5 15.7" fill="none" stroke="#0b62a8" stroke-width="1.35"/></svg>
<svg class="a" style="left:1628px;top:894px" width="12" height="18" viewBox="0 0 12 18"><path d="M3.5 2.3 L9.5 9 L3.5 15.7" fill="none" stroke="#0b62a8" stroke-width="1.35"/></svg>
</body></html>
